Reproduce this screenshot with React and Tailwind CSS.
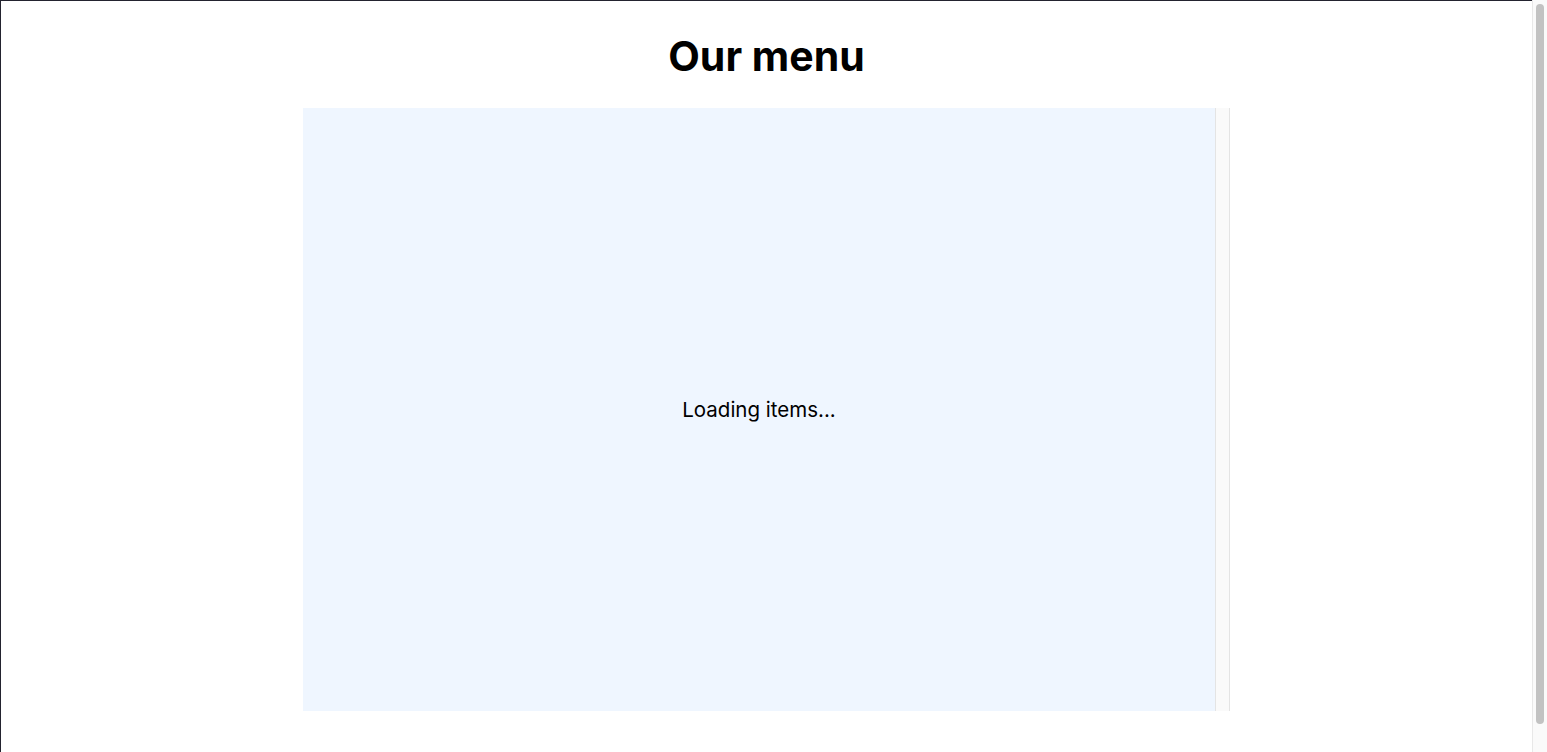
import React from 'react';

function App() {
  return (
    <div
      className="flex h-[752px] overflow-hidden bg-white text-black"
      style={{ fontFamily: 'Inter, "Noto Sans", sans-serif' }}
    >
      <main className="flex-1 border-t border-l border-[#23232f]">
        <h1 className="pt-[31px] text-center text-[41px] font-bold leading-[48px]">Our menu</h1>
        <div className="mx-auto mt-[28px] flex h-[603px] w-[927px]">
          <div className="flex flex-1 items-center justify-center bg-blue-50">
            <p className="pt-[2px] text-[20.5px]">Loading items...</p>
          </div>
          <div className="w-[15px] border-x border-[#e4e4e4] bg-[#fafafa]" />
        </div>
      </main>
      {/* page scrollbar */}
      <div className="w-[15px] border-l border-[#e8e8e8] bg-[#fafafa] pt-[4px] pl-[3px]">
        <div className="h-[720px] w-[8px] rounded-full bg-[#c2c2c2]" />
      </div>
    </div>
  );
}

export default App;
